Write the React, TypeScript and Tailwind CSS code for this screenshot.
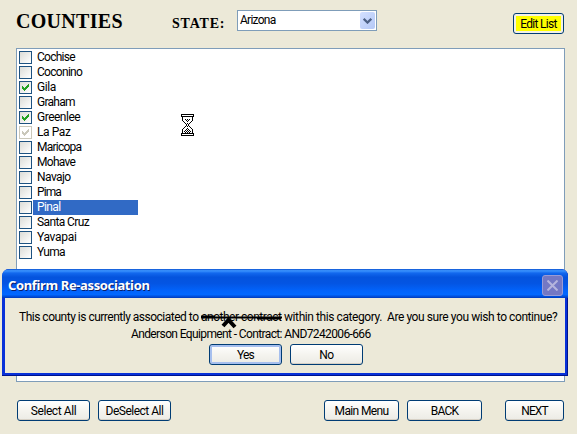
import type { ReactNode } from "react";

const counties = [
  { name: "Cochise", sp: "tracking-[-0.75px]" },
  { name: "Coconino", sp: "tracking-[-0.7px]" },
  { name: "Gila", sp: "tracking-[-0.4px]", state: "on" },
  { name: "Graham", sp: "tracking-[-0.75px]" },
  { name: "Greenlee", sp: "tracking-[-0.5px]", state: "on" },
  { name: "La Paz", sp: "tracking-[-0.4px]", state: "disabled" },
  { name: "Maricopa", sp: "tracking-[-0.75px]" },
  { name: "Mohave", sp: "tracking-[-0.7px]" },
  { name: "Navajo", sp: "tracking-[-0.55px]" },
  { name: "Pima", sp: "tracking-[-0.9px]" },
  { name: "Pinal", sp: "tracking-[-0.6px]", selected: true },
  { name: "Santa Cruz", sp: "tracking-[-0.6px]" },
  { name: "Yavapai", sp: "tracking-[-0.3px]" },
  { name: "Yuma", sp: "tracking-[-0.7px]" },
];

function CheckBox({ state }: { state?: string }) {
  const disabled = state === "disabled";
  return (
    <span
      className={`flex h-[13px] w-[13px] shrink-0 items-center justify-center border ${
        disabled ? "border-[#cac8bb] bg-white" : "border-[#1d5281] bg-linear-to-br from-[#dcdcd7] to-white"
      }`}
    >
      {state && (
        <svg width="7" height="7" viewBox="0 0 7 7" shapeRendering="crispEdges" fill={disabled ? "#cac8bb" : "#21a121"}>
          <path d="M0 2h1v1h1v1h1v-1h1v-1h1v-1h1v-1h1v3h-1v1h-1v1h-1v1h-1v1h-1v-1h-1v-1h-1z" />
        </svg>
      )}
    </span>
  );
}

function Button({ className, focus, children }: { className: string; focus?: boolean; children: ReactNode }) {
  return (
    <button
      className={`flex h-[21px] shrink-0 items-center justify-center whitespace-nowrap rounded-[3px] border border-[#003c74] bg-linear-to-b from-white via-[#f5f4ef] to-[#ecebe5] pt-px ${
        focus ? "shadow-[inset_0_0_0_2px_#a6bfee]" : "shadow-[inset_0_-1px_0_0_#d6d0c5]"
      } ${className}`}
    >
      {children}
    </button>
  );
}

function Hourglass() {
  return (
    <svg className="absolute left-[181px] top-[114px]" width="13" height="22" viewBox="0 0 13 22" shapeRendering="crispEdges">
      <path fill="#fff" d="M2 3h9v5l-3 3l3 3v5h-9v-5l3-3l-3-3z" />
      <path
        fill="#000"
        d="M0 0h13v3h-1v4h-1v1h-1v1h-1v1h-1v2h1v1h1v1h1v1h1v4h1v3h-13v-3h1v-4h1v-1h1v-1h1v-1h1v-2h-1v-1h-1v-1h-1v-1h-1v-4h-1z M1 1v1h11v-1z M2 3v4h1v1h1v1h1v1h1v2h-1v1h-1v1h-1v1h-1v4h9v-4h-1v-1h-1v-1h-1v-1h-1v-2h1v-1h1v-1h1v-1h1v-4z M1 20v1h11v-1z"
        fillRule="evenodd"
      />
      <path
        fill="#000"
        d="M4 5h1v1h-1zM6 5h1v1h-1zM8 5h1v1h-1zM5 6h1v1h-1zM7 6h1v1h-1zM6 7h1v1h-1zM6 9h1v1h-1zM6 12h1v1h-1zM6 14h1v1h-1zM5 15h1v1h-1zM7 15h1v1h-1zM4 16h1v1h-1zM6 16h1v1h-1zM8 16h1v1h-1zM3 17h1v1h-1zM5 17h1v1h-1zM7 17h1v1h-1zM9 17h1v1h-1zM4 18h1v1h-1zM6 18h1v1h-1zM8 18h1v1h-1z"
      />
    </svg>
  );
}

function Dialog() {
  return (
    <div className="absolute left-[2px] top-[269px] flex h-[107px] w-[566px] flex-col overflow-hidden rounded-t-[7px] bg-[#0831d9] shadow-[inset_-1px_-1px_0_#00138c]">
      <div className="flex h-[29px] shrink-0 items-center justify-between bg-[linear-gradient(#0a50d0_0%,#3c95ff_6%,#1268ee_14%,#0453dd_28%,#0455e3_50%,#0263fb_75%,#0268ff_88%,#0046cf_97%,#0038b8_100%)] pl-[6px] pr-[5px] pt-[3px]">
        <span className="whitespace-pre font-['Noto_Sans','Liberation_Sans',sans-serif] text-[13px] font-bold leading-[18px] tracking-[-0.37px] text-white [text-shadow:1px_1px_#0b1f6b]">
          Confirm Re-association
        </span>
        <span className="flex h-[21px] w-[21px] items-center justify-center rounded-[3px] border border-[#9a9bd4] bg-[#7478c4]">
          <svg width="11" height="11" viewBox="0 0 11 11" stroke="#b5b4dd" strokeWidth="2">
            <path d="M0.5 0.5l10 10M10.5 0.5l-10 10" />
          </svg>
        </span>
      </div>
      <div className="ml-[3px] mr-[3px] h-[75px] bg-[#ece9d8] pt-[11px]">
        <p className="flex whitespace-pre pl-[14px] leading-[17px]">
          <span className="tracking-[-0.5px]">This county is currently associated to </span>
          <span className="relative tracking-[-0.48px]">
            another contract
            <svg className="absolute left-0 top-[6px]" width="81" height="15" viewBox="0 0 81 15">
              <path d="M0 2.5h81M0 1.6h14M56 3.4h24" stroke="#000" strokeWidth="2.2" />
              <path d="M22 11l5.5-6l6.5 7" fill="none" stroke="#000" strokeWidth="4" />
            </svg>
          </span>
          <span className="tracking-[-0.42px]"> within this category.  Are you sure you wish to continue?</span>
        </p>
        <p className="whitespace-pre pl-[126px] leading-[17px] tracking-[-0.62px]">
          <span>Anderson Equipment - Contract: AND7242006-666</span>
        </p>
        <div className="flex gap-[8px] pl-[204px] pt-px">
          <Button className="w-[73px] tracking-[-0.8px]" focus>Yes</Button>
          <Button className="w-[73px] tracking-[-0.5px]">No</Button>
        </div>
      </div>
    </div>
  );
}

export default function App() {
  return (
    <div className="relative flex h-[434px] w-[577px] flex-col overflow-hidden bg-[#ece9d8] font-['Roboto','Liberation_Sans',sans-serif] text-[12px] leading-[15px] text-black">
      <header className="flex h-[48px] shrink-0 items-start pl-[16px] pr-[13px]">
        <h1 className="w-[156px] pt-[10px] font-['Liberation_Serif',serif] text-[20px] font-bold leading-[23px] tracking-[0.3px]"><span>COUNTIES</span></h1>
        <span className="w-[65px] pt-[15px] font-['Liberation_Serif',serif] text-[14px] font-semibold leading-[18px] tracking-[0.8px]"><span>STATE:</span></span>
        <div className="mt-[10px] flex h-[21px] w-[140px] justify-between border border-[#7f9db9] bg-white p-px pl-[2px]">
          <span className="leading-[17px] tracking-[-0.75px]">Arizona</span>
          <span className="flex h-[17px] w-[15px] items-center justify-center rounded-[2px] bg-linear-to-br from-[#d3e0ff] to-[#b4c8f6]">
            <svg width="9" height="6" viewBox="0 0 9 6" fill="none" stroke="#4d6185" strokeWidth="2.2">
              <path d="M0.7 0.8l3.8 3.8l3.8-3.8" />
            </svg>
          </span>
        </div>
        <button className="ml-auto mt-[13px] flex h-[21px] w-[51px] items-center justify-center whitespace-nowrap rounded-[3px] border border-[#003c74] bg-[#f2f0e6] p-[2px]">
          <span className="flex h-full w-full items-center justify-center bg-[#ffff00] pt-px tracking-[-0.7px]">Edit List</span>
        </button>
      </header>
      <main className="ml-[16px] h-[334px] w-[549px] shrink-0 border border-[#7f9db9] bg-white pl-[2px] pt-px">
        {counties.map((c) => (
          <div key={c.name} className="flex h-[15px] items-center">
            <CheckBox state={c.state} />
            <span
              className={`ml-px h-[15px] w-[105px] whitespace-nowrap pl-[4px] leading-[15px] ${c.sp} ${
                c.selected ? "bg-[#316ac5] text-white" : ""
              }`}
            >
              {c.name}
            </span>
          </div>
        ))}
      </main>
      <footer className="flex pl-[17px] pr-[13px] pt-[18px]">
        <Button className="w-[73px] tracking-[-0.4px]">Select All</Button>
        <Button className="ml-[8px] w-[73px] tracking-[-0.5px]">DeSelect All</Button>
        <Button className="ml-[153px] w-[75px] tracking-[-0.65px]">Main Menu</Button>
        <Button className="ml-[8px] w-[75px] tracking-[-0.8px]">BACK</Button>
        <Button className="ml-auto w-[59px] tracking-[-0.9px]">NEXT</Button>
      </footer>
      <Hourglass />
      <Dialog />
    </div>
  );
}
